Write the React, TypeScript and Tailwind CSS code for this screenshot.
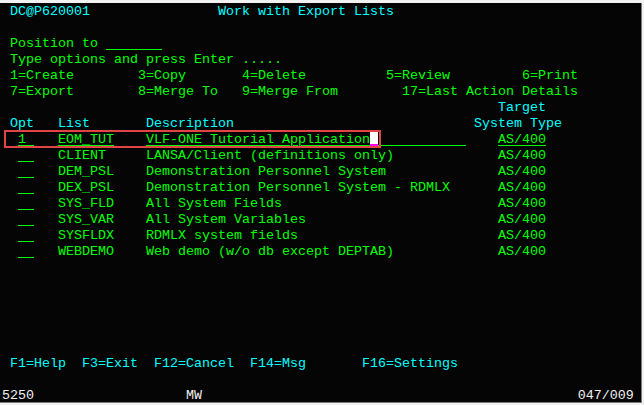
import React from "react";

type Seg = { c: number; t: string; k?: "g" | "c" | "w" | "cur"; u?: number };

const colorCls: Record<string, string> = {
  g: "text-[#00ff00]",
  c: "text-[#00ffff]",
  w: "text-[#f0f0f0]",
  cur: "bg-[#ffffff] text-black",
};

function Row({ segs }: { segs: Seg[] }) {
  let pos = 0;
  const out: React.ReactNode[] = [];
  segs.forEach((s, i) => {
    if (s.c > pos) out.push(<span key={"p" + i}>{" ".repeat(s.c - pos)}</span>);
    const len = Math.max(s.t.length, s.u ?? 0);
    const text = s.t.padEnd(len, " ");
    let cls = colorCls[s.k ?? "g"];
    if (s.k === "cur") {
      cls += " underline decoration-[#ff00ff] decoration-2 underline-offset-[1px]";
    } else if (s.u) {
      cls += " underline decoration-[#00ff00] decoration-1 underline-offset-[2px]";
    }
    out.push(
      <span key={"s" + i} className={cls}>
        {text}
      </span>
    );
    pos = s.c + len;
  });
  return <div className="h-4 leading-4 whitespace-pre">{out}</div>;
}

const lists: [string, string][] = [
  ["CLIENT", "LANSA/Client (definitions only)"],
  ["DEM_PSL", "Demonstration Personnel System"],
  ["DEX_PSL", "Demonstration Personnel System - RDMLX"],
  ["SYS_FLD", "All System Fields"],
  ["SYS_VAR", "All System Variables"],
  ["SYSFLDX", "RDMLX system fields"],
  ["WEBDEMO", "Web demo (w/o db except DEPTAB)"],
];

const rows: Seg[][] = [
  [
    { c: 1, t: "DC@P620001", k: "c" },
    { c: 27, t: "Work with Export Lists", k: "c" },
  ],
  [],
  [
    { c: 1, t: "Position to" },
    { c: 13, t: "", u: 7 },
  ],
  [{ c: 1, t: "Type options and press Enter ....." }],
  [
    { c: 1, t: "1=Create" },
    { c: 17, t: "3=Copy" },
    { c: 30, t: "4=Delete" },
    { c: 48, t: "5=Review" },
    { c: 65, t: "6=Print" },
  ],
  [
    { c: 1, t: "7=Export" },
    { c: 17, t: "8=Merge To" },
    { c: 30, t: "9=Merge From" },
    { c: 50, t: "17=Last Action Details" },
  ],
  [{ c: 62, t: "Target", k: "c" }],
  [
    { c: 1, t: "Opt", k: "c" },
    { c: 7, t: "List", k: "c" },
    { c: 18, t: "Description", k: "c" },
    { c: 59, t: "System Type", k: "c" },
  ],
  [
    { c: 2, t: "1", u: 2 },
    { c: 7, t: "EOM_TUT", u: 7 },
    { c: 18, t: "VLF-ONE Tutorial Application", u: 28 },
    { c: 46, t: " ", k: "cur" },
    { c: 47, t: "", u: 11 },
    { c: 62, t: "AS/400", u: 6 },
  ],
  ...lists.map(([l, d]) => [
    { c: 2, t: "", u: 2 },
    { c: 7, t: l },
    { c: 18, t: d },
    { c: 62, t: "AS/400" },
  ] as Seg[]),
  [],
  [],
  [],
  [],
  [],
  [],
  [
    { c: 1, t: "F1=Help", k: "c" },
    { c: 10, t: "F3=Exit", k: "c" },
    { c: 19, t: "F12=Cancel", k: "c" },
    { c: 31, t: "F14=Msg", k: "c" },
    { c: 45, t: "F16=Settings", k: "c" },
  ],
  [],
];

export default function App() {
  return (
    <div className="w-[644px] h-[405px] bg-[#f2f2f2] pt-[3px] pr-[2px] pb-[2px] overflow-hidden">
      <div className="relative h-full bg-[#050505] border-r border-b border-[#7a7a7a] pl-[2px] pt-[1px] font-['Liberation_Mono',monospace] text-[13.3333px]">
        <div className="flex flex-col">
          {rows.map((r, i) => (
            <Row key={i} segs={r} />
          ))}
        </div>
        <div className="h-[14px] leading-[15px] whitespace-pre text-[#f0f0f0]">
          {"5250" + " ".repeat(19) + "MW" + " ".repeat(47) + "047/009"}
        </div>
        <div className="absolute left-[4px] top-[127px] w-[377px] h-[18px] border-2 border-[#e04444]" />
      </div>
    </div>
  );
}
